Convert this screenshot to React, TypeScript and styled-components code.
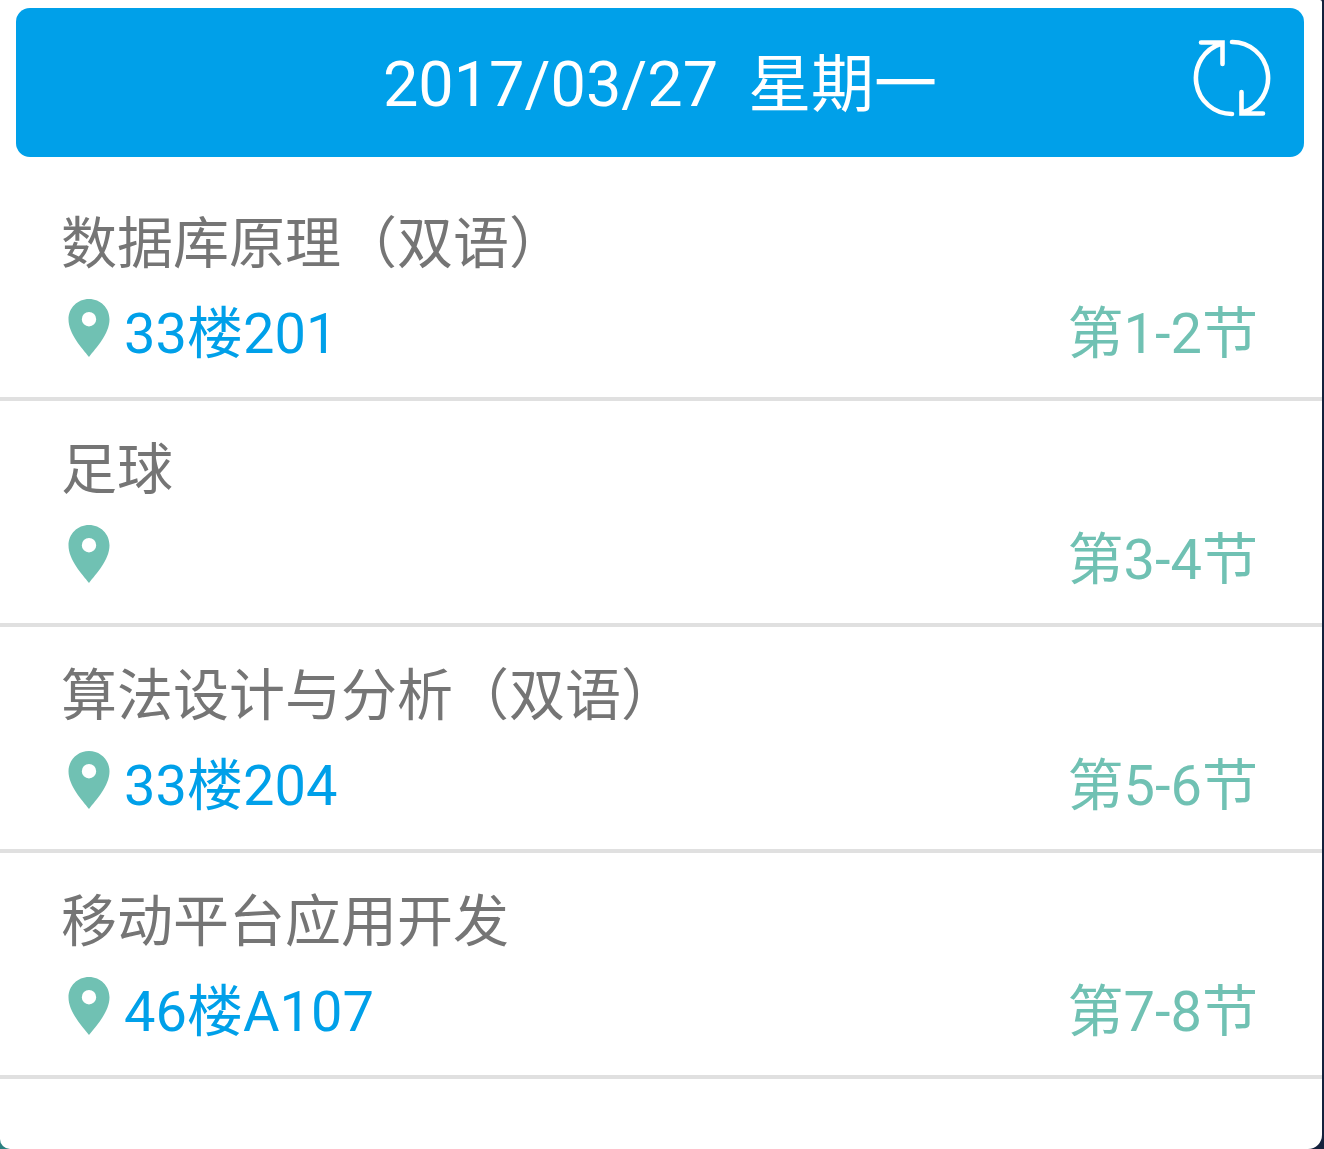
import React from 'react';
import styled, { createGlobalStyle } from 'styled-components';

const GlobalStyle = createGlobalStyle`
  * { box-sizing: border-box; }
  body {
    margin: 0;
    background: linear-gradient(90deg, #2b8080 0, #2b8080 30%, #14213c 70%, #14213c 100%);
    font-family: Roboto, "Noto Sans CJK SC", sans-serif;
  }
`;

const Page = styled.div`
  min-height: 100vh;
  padding-right: 2px;
  display: flex;
`;

const Card = styled.main`
  flex: 1;
  min-width: 0;
  padding-top: 8px;
  background: #fff;
  border-radius: 0 2px 14px 10px;
`;

const Header = styled.header`
  display: grid;
  grid-template-columns: 1fr auto 1fr;
  align-items: center;
  height: 149px;
  margin: 0 18px 18px 16px;
  padding: 0 32px;
  border-radius: 14px;
  background: #00a0e9;
  color: #fff;
`;

const DateTitle = styled.h1`
  grid-column: 2;
  margin: 4px 0 0;
  display: flex;
  gap: 30px;
  font-size: 63px;
  line-height: 80px;
  font-weight: 400;
  white-space: nowrap;
`;

const RefreshButton = styled.button`
  justify-self: end;
  display: flex;
  margin: 0 0 10px;
  padding: 0;
  border: 0;
  background: none;
  color: inherit;
  cursor: pointer;
`;

const List = styled.ul`
  margin: 0;
  padding: 0;
  list-style: none;
`;

const Course = styled.li`
  height: 226px;
  padding: 27px 64px 0 61px;
  border-bottom: 4px solid #e0e0e0;
`;

const CourseName = styled.h2`
  margin: 0 0 6px;
  color: #757575;
  font-size: 56px;
  line-height: 84px;
  font-weight: 400;
`;

const Details = styled.div`
  display: flex;
  align-items: center;
  height: 84px;
  font-size: 56px;
  line-height: 84px;
`;

const Pin = styled.svg`
  flex: none;
  margin: 0 8px 12px 1px;
`;

const Room = styled.span`
  color: #00a0e9;
`;

const Period = styled.span`
  margin-left: auto;
  color: #70c1b3;
`;

const courses = [
  { name: '数据库原理（双语）', room: '33楼201', period: '第1-2节' },
  { name: '足球', room: '', period: '第3-4节' },
  { name: '算法设计与分析（双语）', room: '33楼204', period: '第5-6节' },
  { name: '移动平台应用开发', room: '46楼A107', period: '第7-8节' },
];

function RefreshIcon() {
  return (
    <svg width="80" height="80" viewBox="0 0 80 80" fill="none" stroke="currentColor" strokeWidth="4.6" strokeLinecap="round" aria-hidden="true">
      <path d="M40 76A36 36 0 0 1 29 5.700M9 4.500H30.500V26" />
      <path d="M40 4A36 36 0 0 1 51 74.300M49.500 54V75.500H71" />
    </svg>
  );
}

function PinIcon() {
  return (
    <Pin width="54" height="60" viewBox="0 0 54 60" aria-hidden="true">
      <path
        fill="#70c1b3"
        fillRule="evenodd"
        d="M27 1C15.500 1 6.500 10 6.500 21.300C6.500 36 20 50 27 59C34 50 47.500 36 47.500 21.300C47.500 10 38.500 1 27 1ZM27 14a7.200 7.200 0 1 1 0 14.400a7.200 7.200 0 1 1 0-14.400Z"
      />
    </Pin>
  );
}

export default function App() {
  return (
    <>
      <GlobalStyle />
      <Page>
        <Card>
          <Header>
            <DateTitle>
              <span>2017/03/27</span>
              <span>星期一</span>
            </DateTitle>
            <RefreshButton type="button" aria-label="刷新">
              <RefreshIcon />
            </RefreshButton>
          </Header>
          <List>
            {courses.map((course) => (
              <Course key={course.period}>
                <CourseName>{course.name}</CourseName>
                <Details>
                  <PinIcon />
                  <Room>{course.room}</Room>
                  <Period>{course.period}</Period>
                </Details>
              </Course>
            ))}
          </List>
        </Card>
      </Page>
    </>
  );
}
